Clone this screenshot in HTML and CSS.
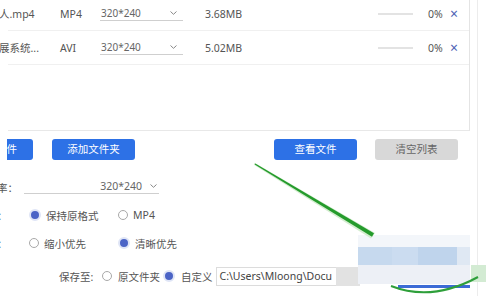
FILE: index.html
```html
<!DOCTYPE html>
<html lang="zh-CN">
<head>
	<meta charset="UTF-8">
	<title>视频转换</title>
	<link rel="stylesheet" href="styles.css">
</head>
<body>
	<div class="app">
		<div class="list">
			<div class="row">
				<span class="name">机器人.mp4</span>
				<span>MP4</span>
				<span class="sel">320*240<svg class="chev" viewBox="0 0 7 4"><polyline points="0.5,0.5 3.5,3.3 6.5,0.5"/></svg></span>
				<span></span>
				<span>3.68MB</span>
				<span class="prog"></span>
				<span></span>
				<span>0%</span>
				<span class="del">×</span>
			</div>
			<div class="row">
				<span class="name">产品展系统...</span>
				<span>AVI</span>
				<span class="sel">320*240<svg class="chev" viewBox="0 0 7 4"><polyline points="0.5,0.5 3.5,3.3 6.5,0.5"/></svg></span>
				<span></span>
				<span>5.02MB</span>
				<span class="prog"></span>
				<span></span>
				<span>0%</span>
				<span class="del">×</span>
			</div>
		</div>

		<div class="actions">
			<div class="btn first"><span>添加文件</span></div>
			<div class="btn">添加文件夹</div>
			<div class="btn push">查看文件</div>
			<div class="btn grey">清空列表</div>
		</div>

		<div class="settings">
			<div class="opt">
				<span class="label">分辨率：</span>
				<span class="sel wide">320*240<svg class="chev" viewBox="0 0 7 4"><polyline points="0.5,0.5 3.5,3.3 6.5,0.5"/></svg></span>
			</div>
			<div class="opt">
				<span class="label">格式：</span>
				<span class="radio first on">保持原格式</span>
				<span class="radio">MP4</span>
			</div>
			<div class="opt">
				<span class="label">质量：</span>
				<span class="radio first">缩小优先</span>
				<span class="radio on">清晰优先</span>
			</div>
			<div class="opt save">
				<span class="save-label">保存至:</span>
				<span class="radio">原文件夹</span>
				<span class="radio on">自定义</span>
				<span class="path">C:\Users\Mloong\Docu</span>
				<span class="path-btn"></span>
			</div>
		</div>
	</div>

	<!-- blurred start button + green marks drawn over the shot -->
	<div class="blur">
		<div class="blur-top"></div>
		<div class="blur-mid">
			<i style="width:34px;background:#c6d9ee"></i>
			<i style="width:26px;background:#cbdcf0"></i>
			<i style="width:39px;background:#bfd4ec"></i>
			<i style="width:13px;background:#dfe8f3"></i>
		</div>
		<div class="blur-low"></div>
	</div>
	<div class="blue-line"></div>
	<div class="green-spot"></div>
	<svg class="marks" width="486" height="296" viewBox="0 0 486 296">
		<polygon points="254.5,162.8 375,233 371,238.5 253.8,164.8" fill="#c9e8c4" opacity="0.8"/>
		<polygon points="255.3,163.6 374,233.3 372,236.7 254.7,164.4" fill="#259b2c"/>
		<path d="M391 286 Q432 302 478 277" fill="none" stroke="#2e9f3a" stroke-width="2"/>
	</svg>
</body>
</html>
```

FILE: styles.css
```css
*{
	margin: 0;
	padding: 0;
	box-sizing: border-box;
}
body{
	width: 486px;
	height: 296px;
	overflow: hidden;
	position: relative;
	background: #fff;
	font-family: "Noto Sans", "Noto Sans CJK SC", sans-serif;
	font-size: 10.5px;
	color: #555;
}
.app{
	width: 528px;
	height: 300px;
	margin: -3px 0 0 -50px;
	border-right: 1px solid #ececec;
}

/* file list */
.list{
	width: 462px;
	height: 134px;
	margin-left: 58px;
	border-right: 1px solid #e4e4e4;
	border-bottom: 1px solid #e8e8e8;
}
.row{
	display: grid;
	grid-template-columns: 52px 40px 83px 22px 173px 35px 15px 24px 18px;
	align-items: center;
	height: 34px;
	border-bottom: 1px solid #f0f0f0;
	white-space: nowrap;
}
.name{
	margin-left: -30px;
}
.sel{
	display: flex;
	align-items: center;
	justify-content: space-between;
	height: 14px;
	padding: 0 6px 1px 1px;
	border-bottom: 1px solid #cfcfcf;
	font-size: 10px;
	color: #666;
}
.chev{
	width: 7px;
	height: 4px;
	fill: none;
	stroke: #888;
	stroke-width: 1;
}
.prog{
	height: 2px;
	background: #e3e3e3;
}
.del{
	font-size: 14px;
	line-height: 1;
	color: #4d63b3;
	margin-left: -2px;
}

/* buttons */
.actions{
	display: flex;
	margin-top: 8px;
	padding-left: 57px;
}
.btn{
	width: 84px;
	height: 21px;
	line-height: 21px;
	text-align: center;
	border-radius: 3px;
	background: #2d71e6;
	color: #fff;
	margin-right: 19px;
	white-space: nowrap;
}
.btn.first{
	width: 26px;
	display: flex;
	justify-content: flex-end;
	padding-right: 16px;
	overflow: hidden;
	border-radius: 0 3px 3px 0;
}
.btn.push{
	margin-left: 120px;
	margin-right: 18px;
}
.btn.grey{
	background: #d8d8d8;
	color: #666;
}

/* options */
.settings{
	padding-left: 26px;
}
.opt{
	display: flex;
	align-items: center;
	height: 20px;
	margin-top: 8px;
	white-space: nowrap;
}
.opt:first-child{
	margin-top: 17px;
}
.label{
	width: 48px;
}
.sel.wide{
	width: 135px;
	justify-content: flex-end;
	gap: 8px;
	font-size: 10.5px;
	padding-right: 2px;
}
.radio{
	display: flex;
	align-items: center;
	gap: 5px;
	margin-left: 5px;
}
.radio::before{
	content: '';
	width: 8px;
	height: 8px;
	border-radius: 50%;
	border: 1px solid #a8a8a8;
	background: #fff;
}
.radio.on::before{
	border: 2px solid #dfe5f6;
	background: #4b64c6;
}
.radio.first{
	width: 84px;
}
.save{
	margin-top: 13px;
	margin-left: 83px;
}
.save-label{
	width: 43px;
}
.save .radio{
	margin-left: 0;
	gap: 6px;
}
.save .radio.on{
	margin-left: 3px;
	gap: 6px;
}
.path{
	height: 19px;
	line-height: 17px;
	margin-left: 3px;
	padding-left: 3px;
	width: 120px;
	border: 1px solid #dcdcdc;
	border-right: none;
	color: #444;
	overflow: hidden;
}
.path-btn{
	width: 24px;
	height: 19px;
	background: #e2e2e2;
}

/* overlay: blurred button and hand-drawn marks */
.blur{
	position: absolute;
	left: 358px;
	top: 235px;
	width: 112px;
}
.blur-top{
	height: 12px;
	background: #f3f6fa;
}
.blur-mid{
	display: flex;
	height: 18px;
}
.blur-mid i{
	display: block;
	height: 100%;
}
.blur-low{
	height: 19px;
	background: #edf0f6;
}
.blue-line{
	position: absolute;
	left: 398px;
	top: 285px;
	width: 72px;
	height: 3px;
	background: #3c6bd6;
}
.green-spot{
	position: absolute;
	left: 471px;
	top: 265px;
	width: 15px;
	height: 17px;
	background: #d3ebd3;
}
.marks{
	position: absolute;
	left: 0;
	top: 0;
	pointer-events: none;
}
```
